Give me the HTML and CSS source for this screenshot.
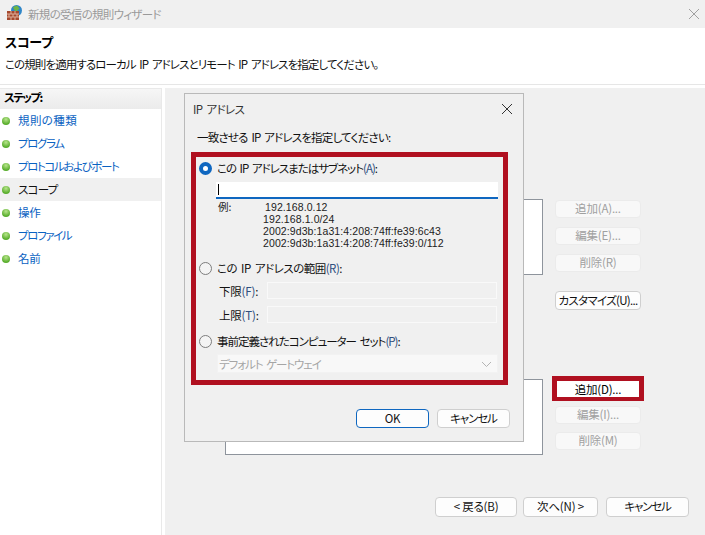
FILE: index.html
```html
<!DOCTYPE html>
<html lang="ja">
<head>
<meta charset="utf-8">
<title>新規の受信の規則ウィザード</title>
<link rel="stylesheet" href="styles.css">
</head>
<body>
<div class="wizard">
  <header class="titlebar">
    <svg class="app-icon" width="18" height="18" viewBox="0 0 18 18">
      <circle cx="10.500" cy="5.500" r="5.500" fill="#2f86c8"/>
      <path d="M7 2l4-1.500 2.500 3-3 3-2-1z" fill="#6fb544"/>
      <rect x="1" y="6" width="12" height="9" fill="#a5482e"/>
      <path d="M1 9h12M1 12h12M5 6v3M9 6v3M3 9v3M7 9v3M11 9v3M5 12v3M9 12v3" stroke="#dcae99" stroke-width="1" fill="none"/>
    </svg>
    <span class="title-text">新規の受信の規則ウィザード</span>
    <svg class="close" width="12" height="12" viewBox="0 0 12 12"><path d="M1 1l10 10M11 1L1 11" stroke="#a0a0a0" stroke-width="1" fill="none"/></svg>
  </header>
  <section class="head">
    <h1>スコープ</h1>
    <p>この規則を適用するローカル IP アドレスとリモート IP アドレスを指定してください。</p>
  </section>
  <div class="body">
    <nav class="steps">
      <div class="steps-head">ステップ:</div>
      <ul>
        <li><i class="dot"></i><a class="kanji">規則の種類</a></li>
        <li><i class="dot"></i><a class="kana">プログラム</a></li>
        <li><i class="dot"></i><a class="kana">プロトコルおよびポート</a></li>
        <li class="current"><i class="dot"></i><span>スコープ</span></li>
        <li><i class="dot"></i><a>操作</a></li>
        <li><i class="dot"></i><a class="kana">プロファイル</a></li>
        <li><i class="dot"></i><a>名前</a></li>
      </ul>
    </nav>
    <main class="main">
      <div class="group g-top">
        <div class="listbox"></div>
        <div class="btns">
          <button class="btn off">追加(A)...</button>
          <button class="btn off">編集(E)...</button>
          <button class="btn off">削除(R)</button>
          <button class="btn on custom">カスタマイズ(U)...</button>
        </div>
      </div>
      <div class="group g-bottom">
        <div class="listbox"></div>
        <div class="btns">
          <div class="hl"><button class="btn plain">追加(D)...</button></div>
          <button class="btn off">編集(I)...</button>
          <button class="btn off">削除(M)</button>
        </div>
      </div>
      <footer class="nav">
        <button class="btn on back">&lt; 戻る(B)</button>
        <button class="btn on next">次へ(N) &gt;</button>
        <button class="btn on cancel">キャンセル</button>
      </footer>
    </main>
  </div>

  <div class="dialog">
    <div class="d-title">
      <span>IP アドレス</span>
      <svg width="12" height="12" viewBox="0 0 12 12"><path d="M1 1l10 10M11 1L1 11" stroke="#333" stroke-width="1" fill="none"/></svg>
    </div>
    <div class="d-body">
      <p class="d-lead">一致させる IP アドレスを指定してください:</p>
      <div class="redbox">
        <div class="radio-row tight"><i class="radio sel"></i><span>この IP アドレスまたはサブネット<b>(A)</b>:</span></div>
        <div class="ip-input"><i class="caret"></i></div>
        <div class="examples">
          <span>例:</span>
          <div class="ex-list">
            <div class="first">192.168.0.12</div>
            <div>192.168.1.0/24</div>
            <div>2002:9d3b:1a31:4:208:74ff:fe39:6c43</div>
            <div>2002:9d3b:1a31:4:208:74ff:fe39:0/112</div>
          </div>
        </div>
        <div class="radio-row r2"><i class="radio"></i><span>この IP アドレスの範囲<b>(R)</b>:</span></div>
        <div class="range"><span>下限<b>(F)</b>:</span><div class="field"></div></div>
        <div class="range"><span>上限<b>(T)</b>:</span><div class="field"></div></div>
        <div class="radio-row r3 tight"><i class="radio"></i><span>事前定義されたコンピューター セット<b>(P)</b>:</span></div>
        <div class="select">
          <span>デフォルト ゲートウェイ</span>
          <svg width="11" height="6" viewBox="0 0 11 6"><path d="M1 1l4.500 4.500L10 1" stroke="#b4b4b4" fill="none"/></svg>
        </div>
      </div>
      <div class="d-actions">
        <button class="btn ok">OK</button>
        <button class="btn on d-cancel">キャンセル</button>
      </div>
    </div>
  </div>
</div>
</body>
</html>
```

FILE: styles.css
```css
* { box-sizing: border-box; }
html, body { margin: 0; padding: 0; }
body {
  width: 705px;
  height: 535px;
  overflow: hidden;
  background: #fff;
  font-family: "Noto Sans CJK JP", "Noto Sans", sans-serif;
  font-feature-settings: "palt";
  font-size: 11.5px;
  letter-spacing: -0.2px;
  color: #111;
}
.wizard { position: relative; width: 705px; height: 535px; display: flex; flex-direction: column; }

.titlebar {
  height: 28px;
  background: #f0f0f0;
  display: flex;
  align-items: center;
  padding: 0 5px 0 6px;
  flex: none;
}
.app-icon { flex: none; margin-right: 4px; }
.title-text { color: #9a9a9a; font-size: 11.5px; flex: 1; letter-spacing: -0.7px; }

.head { height: 56px; padding: 4px 5px 0; flex: none; background: #fff; }
.head h1 { margin: 0; font-size: 13px; font-weight: 700; line-height: 20px; color: #000; }
.head p { margin: 3px 0 0; line-height: 18px; color: #111; white-space: nowrap; letter-spacing: -0.900px; word-spacing: 2px; }

.body { flex: 1; display: flex; border-top: 1px solid #e6e6e6; min-height: 0; padding-top: 3px; background: #fff; }
.steps { width: 162px; flex: none; border-top: 1px solid #e9e9e9; border-right: 1px solid #e9e9e9; }
.steps-head {
  height: 20px;
  padding-left: 4px;
  line-height: 17px;
  font-weight: 700;
  color: #000;
  letter-spacing: -1.600px;
  background: linear-gradient(#f6f6f6, #ebebeb);
}
.steps ul { list-style: none; margin: 0; padding: 0; }
.steps li { height: 23px; display: flex; align-items: center; padding: 0 0 2px 2px; }
.steps li .dot { margin-top: 2px; }
.steps li a { color: #0a62c2; }
.steps li a.kana { letter-spacing: -1.400px; }
.steps li a.kanji { letter-spacing: 0.400px; }
.steps li span { color: #111; letter-spacing: -0.700px; }
.steps li.current { background: #f0f0f0; }
.dot {
  width: 8px;
  height: 8px;
  border-radius: 50%;
  margin-right: 8px;
  background: radial-gradient(circle at 50% 30%, #b8e58c, #58ad2c 70%);
}

.main {
  flex: 1;
  margin-left: 3px;
  background: #f0f0f0;
  display: flex;
  flex-direction: column;
  padding: 111px 16px 18px 60px;
}
.group { display: flex; gap: 12px; align-items: flex-start; }
.g-bottom { margin-top: 66px; }
.listbox { width: 318px; height: 76px; background: #fff; border: 1px solid #8e949c; flex: none; }
.g-bottom .listbox { margin-top: 3px; }
.btns { display: flex; flex-direction: column; gap: 9px; width: 86px; padding-top: 1px; }
.g-bottom .btns { padding-top: 0; gap: 5px; margin-left: -3px; width: 92px; }
.g-bottom .btns .off { margin-left: 3px; width: 86px; }
.g-bottom .btns .off + .off { margin-top: 3px; }

.btn {
  font: inherit;
  font-size: 11.5px;
  line-height: 1;
  height: 18px;
  padding: 0;
  border-radius: 4px;
  white-space: nowrap;
  letter-spacing: -0.2px;
}
.btn.off { background: #f8f8f8; border: 1px solid #ebebeb; color: #a0a0a0; }
.btn.on { background: #fdfdfd; border: 1px solid #cfcfcf; color: #111; }
.btn.custom { margin-top: 10px; height: 19px; letter-spacing: -0.700px; }
.hl { border: 5px solid #b01020; height: 25px; background: #fff; }
.btn.plain { width: 100%; height: 15px; background: #fff; border: 0; border-radius: 0; color: #000; }

.nav { margin-top: auto; margin-left: 210px; display: flex; gap: 6px; }
.nav .btn { height: 20px; }
.back { width: 82px; }
.next { width: 75px; }
.btn.cancel { width: 83px; margin-left: 2px; letter-spacing: -1.200px; }

.dialog {
  position: absolute;
  left: 184px;
  top: 93px;
  width: 340px;
  height: 349px;
  background: #f0f0f0;
  border: 1px solid #b9b9b9;
  display: flex;
  flex-direction: column;
}
.d-title {
  height: 29px;
  display: flex;
  align-items: center;
  justify-content: space-between;
  padding: 0 10px 0 8px;
  flex: none;
  color: #333;
  letter-spacing: -0.600px;
  word-spacing: 2px;
}
.d-body { flex: 1; padding: 0 6px; display: flex; flex-direction: column; }
.d-lead { margin: 5px 0 0 6px; line-height: 18px; color: #111; letter-spacing: -0.800px; word-spacing: 2px; }
.redbox {
  margin-top: 6px;
  width: 317px;
  height: 233px;
  border: 5px solid #b01020;
  padding: 2px 6px 0 3px;
}
.radio-row { display: flex; align-items: center; height: 18px; gap: 5px; white-space: nowrap; word-spacing: 2px; }
.radio-row.tight { letter-spacing: -1px; }
.radio-row b { font-weight: 400; color: #2f4f7f; }
.radio {
  width: 13px;
  height: 13px;
  border-radius: 50%;
  border: 1px solid #7d7d7d;
  flex: none;
  background: #f4f4f4;
}
.radio.sel { border: 4px solid #0f67c0; background: #fff; }
.ip-input {
  margin: 5px 0 0 17px;
  height: 17px;
  width: 282px;
  background: #fff;
  border-bottom: 2px solid #0f67c0;
  padding: 2px 0 0 2px;
}
.caret { display: block; width: 1px; height: 11px; background: #000; }
.examples {
  display: flex;
  margin: 2px 0 0 19px;
  font-family: "Liberation Sans", sans-serif;
  font-size: 10.500px;
  line-height: 12px;
  color: #222;
  letter-spacing: 0.100px;
}
.examples > span { width: 45px; flex: none; font-family: "Noto Sans CJK JP", sans-serif; }
.ex-list .first { padding-left: 2px; }
.r2 { margin-top: 10px; letter-spacing: -0.500px; }
.range { display: flex; align-items: center; margin: 5px 0 0 20px; height: 17px; }
.range + .range { margin-top: 7px; }
.range > span { width: 48px; flex: none; }
.range b { font-weight: 400; color: #2f4f7f; }
.field { width: 230px; height: 17px; background: #f0f0f0; border: 1px solid #f9f9f9; }
.r3 { margin-top: 9px; }
.select {
  margin: 4px 0 0 18px;
  width: 281px;
  height: 19px;
  background: #f8f8f8;
  border: 1px solid #f2f2f2;
  display: flex;
  align-items: center;
  justify-content: space-between;
  padding: 0 5px 0 1px;
  color: #a5a5a5;
  letter-spacing: -1.100px;
  word-spacing: 2px;
}
.d-actions { display: flex; gap: 8px; margin: 24px 0 0 165px; }
.d-actions .btn { height: 19px; width: 73px; }
.btn.d-cancel { letter-spacing: -1.100px; }
.btn.ok { background: #fdfdfd; border: 1px solid #0f67c0; color: #111; }
```
